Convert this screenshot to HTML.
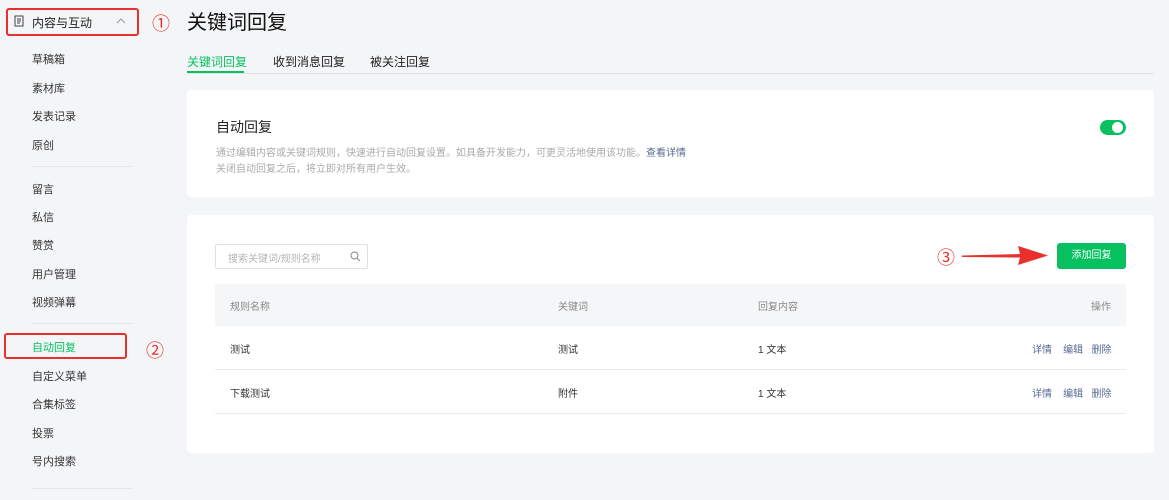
<!DOCTYPE html>
<html><head><meta charset="utf-8"><style>
*{margin:0;padding:0;box-sizing:border-box}
body{width:1169px;height:500px;overflow:hidden;background:#f4f5f7;font-family:"Liberation Sans","Noto Sans CJK SC",sans-serif;color:#333;position:relative}
.a{position:absolute;white-space:nowrap}
.nav{font-size:11px;color:#353535}
.div{position:absolute;left:32px;width:100px;height:1px;background:#e4e5e7}
.card{position:absolute;background:#fff;border-radius:4px;left:187px;width:967px}
.red{position:absolute;border:2px solid #e8302c;border-radius:3px}
.circ{position:absolute;color:#e8302c;font-size:18px}
.th{font-size:10px;color:#888}
.td{font-size:10px;color:#333}
.lk{font-size:10px;color:#576b95}
</style></head><body>
<div class="red" style="left:6px;top:8px;width:133px;height:28px"></div>
<svg class="a" style="left:14px;top:15px" width="10" height="12" viewBox="0 0 10 12"><rect x="1" y="1" width="8" height="10" fill="none" stroke="#444" stroke-width="1"/><path d="M3 4h4M3 6h4M3 8h3" stroke="#444" stroke-width="0.9"/></svg>
<div class="a" style="left:32px;top:14px;font-size:12px;color:#222">内容与互动</div>
<svg class="a" style="left:116px;top:17px" width="10" height="7"><path d="M1 6l4-4 4 4" fill="none" stroke="#999" stroke-width="1"/></svg>
<div class="circ" style="left:152px;top:10px">①</div>
<div class="a nav" style="left:32px;top:51px">草稿箱</div>
<div class="a nav" style="left:32px;top:80px">素材库</div>
<div class="a nav" style="left:32px;top:108px">发表记录</div>
<div class="a nav" style="left:32px;top:137px">原创</div>
<div class="div" style="top:166px"></div>
<div class="a nav" style="left:32px;top:181px">留言</div>
<div class="a nav" style="left:32px;top:209px">私信</div>
<div class="a nav" style="left:32px;top:237px">赞赏</div>
<div class="a nav" style="left:32px;top:266px">用户管理</div>
<div class="a nav" style="left:32px;top:294px">视频弹幕</div>
<div class="div" style="top:323px"></div>
<div class="red" style="left:4px;top:333px;width:123px;height:26px"></div>
<div class="a nav" style="left:32px;top:339px;color:#07c160">自动回复</div>
<div class="circ" style="left:146px;top:337px">②</div>
<div class="a nav" style="left:32px;top:368px">自定义菜单</div>
<div class="a nav" style="left:32px;top:396px">合集标签</div>
<div class="a nav" style="left:32px;top:425px">投票</div>
<div class="a nav" style="left:32px;top:453px">号内搜索</div>
<div class="div" style="top:488px"></div>

<div class="a" style="left:187px;top:6px;font-size:20px;color:#111">关键词回复</div>
<div class="a" style="left:187px;top:53px;font-size:12px;color:#07c160">关键词回复</div>
<div class="a" style="left:273px;top:53px;font-size:12px;color:#222">收到消息回复</div>
<div class="a" style="left:370px;top:53px;font-size:12px;color:#222">被关注回复</div>
<div class="a" style="left:187px;top:73px;width:967px;height:1px;background:#e2e3e5"></div>
<div class="a" style="left:187px;top:71px;width:57px;height:2px;background:#07c160"></div>

<div class="card" style="top:90px;height:107px"></div>
<div class="a" style="left:216px;top:117px;font-size:14px;color:#222">自动回复</div>
<div class="a" style="left:216px;top:144px;font-size:10px;color:#aaa">通过编辑内容或关键词规则，快速进行自动回复设置。如具备开发能力，可更灵活地使用该功能。<span style="color:#576b95">查看详情</span></div>
<div class="a" style="left:216px;top:160px;font-size:10px;color:#aaa">关闭自动回复之后，将立即对所有用户生效。</div>
<div class="a" style="left:1100px;top:120px;width:26px;height:15px;border-radius:8px;background:#07c160"></div>
<div class="a" style="left:1112px;top:122px;width:11px;height:11px;border-radius:50%;background:#fff"></div>

<div class="card" style="top:215px;height:238px"></div>
<div class="a" style="left:215px;top:244px;width:153px;height:25px;border:1px solid #e0e0e0;border-radius:2px"></div>
<div class="a" style="left:228px;top:250px;font-size:10px;color:#b5b5b5">搜索关键词/规则名称</div>
<svg class="a" style="left:350px;top:251px" width="11" height="11"><circle cx="4.5" cy="4.5" r="3.5" fill="none" stroke="#888" stroke-width="1"/><path d="M7 7l3 3" stroke="#888" stroke-width="1"/></svg>
<div class="circ" style="left:937px;top:244px">③</div>
<svg class="a" style="left:960px;top:243px" width="90" height="26"><path d="M2 12.5 L60 11 L58 3 L88 12.5 L58 22 L60 14.5 L2 14 Z" fill="#e8302c"/></svg>
<div class="a" style="left:1057px;top:243px;width:69px;height:26px;background:#07c160;border-radius:3px;color:#fff;font-size:10px;text-align:center;line-height:26px">添加回复</div>

<div class="a" style="left:215px;top:284px;width:911px;height:42px;background:#f5f6f7"></div>
<div class="a th" style="left:230px;top:298px">规则名称</div>
<div class="a th" style="left:558px;top:298px">关键词</div>
<div class="a th" style="left:758px;top:298px">回复内容</div>
<div class="a th" style="left:1091px;top:298px">操作</div>
<div class="a td" style="left:230px;top:341px">测试</div>
<div class="a td" style="left:558px;top:341px">测试</div>
<div class="a td" style="left:758px;top:341px">1 文本</div>
<div class="a lk" style="left:1032px;top:341px">详情&nbsp;&nbsp;&nbsp;&nbsp;编辑&nbsp;&nbsp;&nbsp;删除</div>
<div class="a" style="left:215px;top:369px;width:911px;height:1px;background:#ebebeb"></div>
<div class="a td" style="left:230px;top:385px">下载测试</div>
<div class="a td" style="left:558px;top:385px">附件</div>
<div class="a td" style="left:758px;top:385px">1 文本</div>
<div class="a lk" style="left:1032px;top:385px">详情&nbsp;&nbsp;&nbsp;&nbsp;编辑&nbsp;&nbsp;&nbsp;删除</div>
<div class="a" style="left:215px;top:413px;width:911px;height:1px;background:#ebebeb"></div>
</body></html>
